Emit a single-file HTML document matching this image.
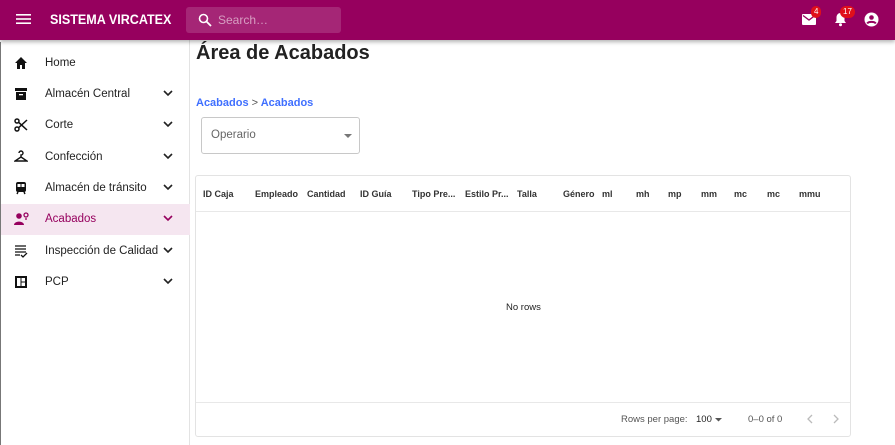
<!DOCTYPE html>
<html><head><meta charset="utf-8"><style>
*{box-sizing:border-box;margin:0;padding:0}
body{width:895px;height:445px;overflow:hidden;font-family:"Liberation Sans",sans-serif;background:#fff;position:relative;color:#222}
.top{position:absolute;left:0;top:0;width:895px;height:40px;background:#96005e;box-shadow:0 2px 4px rgba(0,0,0,.3);z-index:2}
.title{position:absolute;left:50px;top:12px;color:#fff;font-size:13.5px;font-weight:bold;transform:scaleX(0.93);transform-origin:left}
.search{position:absolute;left:186px;top:7px;width:155px;height:26px;background:rgba(255,255,255,.15);border-radius:3px}
.search span{position:absolute;left:32px;top:6px;color:rgba(255,255,255,.55);font-size:12px}
.badge{position:absolute;background:#e0101a;color:#fff;font-size:8px;border-radius:7px;height:12px;line-height:12px;text-align:center;padding:0 3px}
.side{position:absolute;left:0;top:42px;width:190px;height:403px;border-left:1px solid #777}
.sideb{position:absolute;left:189px;top:40px;width:1px;height:405px;background:#e3e3e3}
.item{position:absolute;left:0;width:189px;height:31px}
.item .t{position:absolute;left:44px;top:9px;font-size:11.5px;color:#222}
.item svg.ic{position:absolute;left:13px;top:8px}
.item .ch{position:absolute;left:162px;top:10px}
.sel{background:#f5e6f0}.sel .t{color:#96005e}
h1{position:absolute;left:196px;top:42px;font-size:20px;font-weight:bold;color:#222}
.bc{position:absolute;left:196px;top:97px;font-size:11px;font-weight:bold;color:#3f6fff}
.bc b{color:#555;font-weight:normal}
.sel2{position:absolute;left:201px;top:117px;width:159px;height:37px;border:1px solid #c8c8c8;border-radius:3px}
.sel2 span{position:absolute;left:9px;top:11px;font-size:11.5px;color:#666}
.tbl{position:absolute;left:195px;top:175px;width:656px;height:262px;border:1px solid #e3e3e3;border-radius:3px}
.hd{position:absolute;top:13px;font-size:9px;font-weight:bold;color:#333}
.line{position:absolute;left:0;width:654px;height:1px;background:#e8e8e8}
.ft{position:absolute;top:238px;font-size:9.5px;color:#555}
</style></head><body>
<div class="top">
<svg style="position:absolute;left:16px;top:13px" width="15" height="12" viewBox="0 0 15 12"><rect y="1" width="15" height="1.6" fill="#fff"/><rect y="5.2" width="15" height="1.6" fill="#fff"/><rect y="9.4" width="15" height="1.6" fill="#fff"/></svg>
<div class="title">SISTEMA VIRCATEX</div>
<div class="search"><svg style="position:absolute;left:12px;top:6px" width="14" height="14" viewBox="0 0 14 14"><circle cx="5.5" cy="5.5" r="4" stroke="#fff" stroke-width="1.6" fill="none"/><path d="M8.5 8.5L13 13" stroke="#fff" stroke-width="1.8"/></svg><span>Search…</span></div>
<svg style="position:absolute;left:802px;top:14px" width="14" height="11" viewBox="0 0 14 11"><rect width="14" height="11" rx="1" fill="#fff"/><path d="M1 1.5L7 6L13 1.5" stroke="#96005e" stroke-width="1.3" fill="none"/></svg>
<div class="badge" style="left:811px;top:6px">4</div>
<svg style="position:absolute;left:834px;top:12px" width="13" height="15" viewBox="0 0 13 15"><path d="M6.5 1C4 1 2.5 3 2.5 5.5V9L1 11H12L10.5 9V5.5C10.5 3 9 1 6.5 1Z" fill="#fff"/><circle cx="6.5" cy="12.8" r="1.5" fill="#fff"/></svg>
<div class="badge" style="left:840px;top:6px">17</div>
<svg style="position:absolute;left:864px;top:12px" width="15" height="15" viewBox="0 0 15 15"><circle cx="7.5" cy="7.5" r="7" fill="#fff"/><circle cx="7.5" cy="5.5" r="2.3" fill="#96005e"/><path d="M3.2 11.5C4.5 9.3 10.5 9.3 11.8 11.5" stroke="#96005e" stroke-width="2" fill="none"/></svg>
</div>
<div class="sideb"></div>
<div class="side">
<div class="item" style="top:6px"><svg class="ic" width="14" height="14" viewBox="0 0 14 14"><path d="M7 1L1 7H3V13H6V9H8V13H11V7H13Z" fill="#111"/></svg><span class="t">Home</span></div>
<div class="item" style="top:37px"><svg class="ic" width="14" height="14" viewBox="0 0 14 14"><rect x="1" y="1" width="12" height="3" fill="#111"/><rect x="2" y="5" width="10" height="8" fill="#111"/><rect x="5" y="7" width="4" height="1.3" fill="#fff"/></svg><span class="t">Almacén Central</span><svg class="ch" width="10" height="8"><path d="M1 2L5 6L9 2" stroke="#222" stroke-width="1.6" fill="none"/></svg></div>
<div class="item" style="top:68px"><svg class="ic" width="14" height="14" viewBox="0 0 14 14"><circle cx="3" cy="3" r="2" stroke="#111" stroke-width="1.5" fill="none"/><circle cx="3" cy="11" r="2" stroke="#111" stroke-width="1.5" fill="none"/><path d="M4.5 4.2L13 12M4.5 9.8L13 2" stroke="#111" stroke-width="1.5"/></svg><span class="t">Corte</span><svg class="ch" width="10" height="8"><path d="M1 2L5 6L9 2" stroke="#222" stroke-width="1.6" fill="none"/></svg></div>
<div class="item" style="top:100px"><svg class="ic" width="14" height="14" viewBox="0 0 14 14"><path d="M5 3A2 2 0 1 1 7 5V7L1 11H13L7 7" stroke="#111" stroke-width="1.4" fill="none"/></svg><span class="t">Confección</span><svg class="ch" width="10" height="8"><path d="M1 2L5 6L9 2" stroke="#222" stroke-width="1.6" fill="none"/></svg></div>
<div class="item" style="top:131px"><svg class="ic" width="14" height="14" viewBox="0 0 14 14"><rect x="2" y="1" width="10" height="10" rx="2" fill="#111"/><rect x="3.5" y="3" width="3" height="3" fill="#fff"/><rect x="7.5" y="3" width="3" height="3" fill="#fff"/><path d="M4 11L3 13M10 11L11 13" stroke="#111" stroke-width="1.4"/></svg><span class="t">Almacén de tránsito</span><svg class="ch" width="10" height="8"><path d="M1 2L5 6L9 2" stroke="#222" stroke-width="1.6" fill="none"/></svg></div>
<div class="item sel" style="top:162px"><svg class="ic" width="16" height="14" viewBox="0 0 16 14"><circle cx="5" cy="4" r="2.8" fill="#96005e"/><path d="M0 13C0 8.5 10 8.5 10 13Z" fill="#96005e"/><circle cx="12" cy="3" r="2" stroke="#96005e" stroke-width="1.3" fill="none"/><path d="M12 6V8" stroke="#96005e" stroke-width="1.3"/></svg><span class="t">Acabados</span><svg class="ch" width="10" height="8"><path d="M1 2L5 6L9 2" stroke="#96005e" stroke-width="1.6" fill="none"/></svg></div>
<div class="item" style="top:194px"><svg class="ic" width="14" height="14" viewBox="0 0 14 14"><path d="M1 2H12M1 5H12M1 8H12M1 11H6" stroke="#111" stroke-width="1.3"/><path d="M7 11L9 13L13 9" stroke="#111" stroke-width="1.3" fill="none"/></svg><span class="t">Inspección de Calidad</span><svg class="ch" width="10" height="8"><path d="M1 2L5 6L9 2" stroke="#222" stroke-width="1.6" fill="none"/></svg></div>
<div class="item" style="top:225px"><svg class="ic" width="14" height="14" viewBox="0 0 14 14"><rect x="1" y="1" width="12" height="12" fill="#111"/><rect x="3" y="3" width="3.5" height="8" fill="#fff"/><rect x="7.5" y="3" width="3.5" height="3.5" fill="#fff"/><rect x="7.5" y="7.5" width="3.5" height="3.5" fill="#fff"/></svg><span class="t">PCP</span><svg class="ch" width="10" height="8"><path d="M1 2L5 6L9 2" stroke="#222" stroke-width="1.6" fill="none"/></svg></div>
</div>
<h1>Área de Acabados</h1>
<div class="bc">Acabados <b>&gt;</b> Acabados</div>
<div class="sel2"><span>Operario</span><svg style="position:absolute;left:142px;top:16px" width="8" height="5"><path d="M0 0H8L4 4Z" fill="#777"/></svg></div>
<div class="tbl">
<span class="hd" style="left:7px">ID Caja</span>
<span class="hd" style="left:59px">Empleado</span>
<span class="hd" style="left:111px">Cantidad</span>
<span class="hd" style="left:164px">ID Guía</span>
<span class="hd" style="left:216px">Tipo Pre...</span>
<span class="hd" style="left:269px">Estilo Pr...</span>
<span class="hd" style="left:321px">Talla</span>
<span class="hd" style="left:367px">Género</span>
<span class="hd" style="left:406px">ml</span>
<span class="hd" style="left:440px">mh</span>
<span class="hd" style="left:472px">mp</span>
<span class="hd" style="left:505px">mm</span>
<span class="hd" style="left:538px">mc</span>
<span class="hd" style="left:571px">mc</span>
<span class="hd" style="left:603px">mmu</span>
<div class="line" style="top:35px"></div>
<span style="position:absolute;left:310px;top:126px;font-size:9.5px;color:#222">No rows</span>
<div class="line" style="top:226px"></div>
<span class="ft" style="left:425px">Rows per page:</span>
<span class="ft" style="left:500px;color:#222">100</span>
<svg style="position:absolute;left:519px;top:242px" width="8" height="5"><path d="M0 0H7L3.5 3.5Z" fill="#555"/></svg>
<span class="ft" style="left:552px">0–0 of 0</span>
<svg style="position:absolute;left:610px;top:237px" width="8" height="12"><path d="M6 2L2 6L6 10" stroke="#bbb" stroke-width="1.3" fill="none"/></svg>
<svg style="position:absolute;left:636px;top:237px" width="8" height="12"><path d="M2 2L6 6L2 10" stroke="#bbb" stroke-width="1.3" fill="none"/></svg>
</div>
</body></html>
